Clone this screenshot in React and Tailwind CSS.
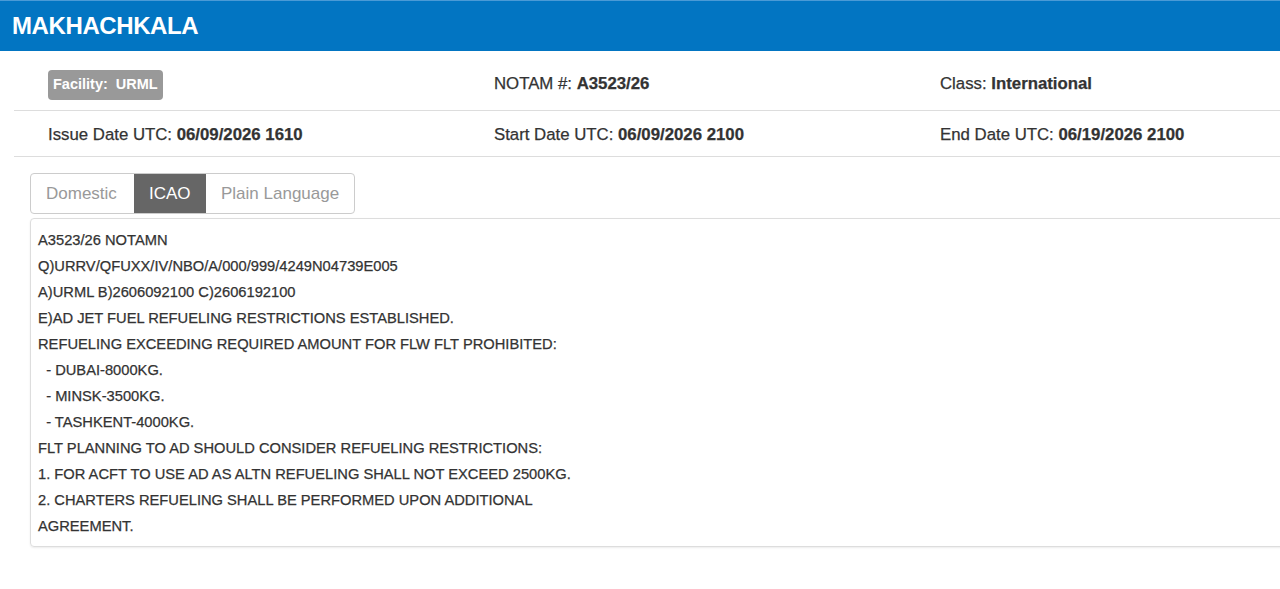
export default function App() {
  const lines = [
    "A3523/26 NOTAMN",
    "Q)URRV/QFUXX/IV/NBO/A/000/999/4249N04739E005",
    "A)URML B)2606092100 C)2606192100",
    "E)AD JET FUEL REFUELING RESTRICTIONS ESTABLISHED.",
    "REFUELING EXCEEDING REQUIRED AMOUNT FOR FLW FLT PROHIBITED:",
    "  - DUBAI-8000KG.",
    "  - MINSK-3500KG.",
    "  - TASHKENT-4000KG.",
    "FLT PLANNING TO AD SHOULD CONSIDER REFUELING RESTRICTIONS:",
    "1. FOR ACFT TO USE AD AS ALTN REFUELING SHALL NOT EXCEED 2500KG.",
    "2. CHARTERS REFUELING SHALL BE PERFORMED UPON ADDITIONAL",
    "AGREEMENT.",
  ];
  return (
    <div className="w-[1280px] h-[589px] overflow-hidden bg-white text-[#333] font-['Liberation_Sans',Arial,sans-serif]">
      <div className="h-[51px] bg-[#0275c2] border-t border-[#4a9ad6] flex items-center pl-[12px]">
        <h1 className="text-white text-[24px] font-bold tracking-[-0.4px]">MAKHACHKALA</h1>
      </div>
      <div className="ml-[14px] w-[1340px] [-webkit-text-stroke:0.25px_#333]">
        <div className="h-[60px] pt-[6px] border-b border-[#ddd] grid grid-cols-[446px_446px_446px] items-center pl-[34px] text-[16.8px]">
          <div className="flex pt-[3px]">
            <span className="inline-flex items-center h-[30px] px-[5px] rounded-[4px] bg-[#999] text-white text-[14.5px] font-bold whitespace-pre [-webkit-text-stroke:0px]">
              Facility:  URML
            </span>
          </div>
          <div>NOTAM #: <b>A3523/26</b></div>
          <div>Class: <b>International</b></div>
        </div>
        <div className="h-[46px] pt-[3px] border-b border-[#ddd] grid grid-cols-[446px_446px_446px] items-center pl-[34px] text-[16.8px]">
          <div>Issue Date UTC: <b>06/09/2026 1610</b></div>
          <div>Start Date UTC: <b>06/09/2026 2100</b></div>
          <div>End Date UTC: <b>06/19/2026 2100</b></div>
        </div>
      </div>
      <div className="ml-[30px] mt-[16px]">
        <div className="inline-flex h-[41px] border border-[#ccc] rounded-[4px] overflow-hidden text-[17px] text-[#999]">
          <div className="flex items-center px-[15px] w-[103px]">Domestic</div>
          <div className="flex items-center px-[15px] w-[72px] bg-[#666] text-white">ICAO</div>
          <div className="flex items-center px-[15px]">Plain Language</div>
        </div>
        <div className="mt-[4px] w-[1300px] border border-[#ddd] rounded-[4px] shadow-[0_1px_2px_rgba(0,0,0,0.08)] pl-[7px] pt-[8px] pb-[7px] text-[14.7px] leading-[26px] text-[#333] [-webkit-text-stroke:0.25px_#333]">
          {lines.map((l, i) => (
            <div key={i} className="whitespace-pre">{l}</div>
          ))}
        </div>
      </div>
    </div>
  );
}
